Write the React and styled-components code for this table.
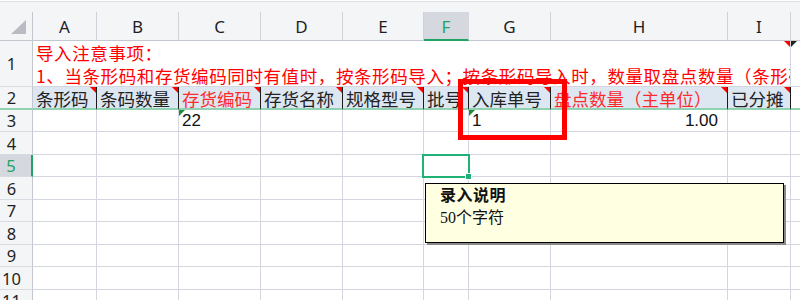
import React from 'react';
import styled, { createGlobalStyle, css } from 'styled-components';

const GlobalStyle = createGlobalStyle`
  html, body {
    margin: 0;
    padding: 0;
    background: #ffffff;
    overflow: hidden;
  }
`;

const COLS = [33, 64, 82, 82, 82, 81, 45, 82, 177, 63, 60];
const ROWS = [12, 29, 46, 23, 22, 23, 22, 23, 22, 23, 22, 23, 22];
const LETTERS = ['A', 'B', 'C', 'D', 'E', 'F', 'G', 'H', 'I', 'J'];

const GRID = '#d3d6df';
const HEAD_BG = '#f4f5f7';
const HEAD_LINE = '#c3c7cf';
const GREEN = '#21a366';
const FREEZE = '#8fd1b1';

const Frame = styled.div`
  position: relative;
  width: 800px;
  height: 300px;
  overflow: hidden;
  background: #fff;
`;

const Sheet = styled.div`
  display: grid;
  grid-template-columns: ${COLS.map(c => `${c}px`).join(' ')};
  grid-template-rows: ${ROWS.map(r => `${r}px`).join(' ')};
  width: max-content;
`;

const TopStrip = styled.div`
  grid-column: 1 / -1;
  background: ${HEAD_BG};
  border-top: 1px solid #dcdfe4;
  margin-top: 1px;
`;

const Corner = styled.div`
  position: relative;
  background: ${HEAD_BG};
  border-right: 1px solid ${HEAD_LINE};
  border-bottom: 1px solid ${HEAD_LINE};
  box-sizing: border-box;

  &::after {
    content: '';
    position: absolute;
    right: 6px;
    bottom: 6px;
    width: 0;
    height: 0;
    border-left: 15px solid transparent;
    border-bottom: 14px solid #b9bcc3;
  }
`;

const ColHead = styled.div`
  display: flex;
  align-items: center;
  justify-content: center;
  box-sizing: border-box;
  background: ${p => (p.$active ? '#d5d8de' : HEAD_BG)};
  color: ${p => (p.$active ? GREEN : '#1f1f1f')};
  border-right: 1px solid ${p => (p.$active ? '#d5d8de' : '#cfd2d9')};
  border-bottom: ${p => (p.$active ? `2px solid ${GREEN}` : `1px solid ${HEAD_LINE}`)};
  font-family: 'Noto Sans', 'Liberation Sans', sans-serif;
  font-size: 17px;
  padding-top: 1px;
`;

const RowHead = styled.div`
  display: flex;
  align-items: center;
  justify-content: center;
  padding-right: 9px;
  box-sizing: border-box;
  background: ${p => (p.$active ? '#d5d8de' : HEAD_BG)};
  color: ${p => (p.$active ? GREEN : '#1f1f1f')};
  border-right: ${p => (p.$active ? `2px solid ${GREEN}` : `1px solid ${HEAD_LINE}`)};
  border-bottom: ${p => (p.$freeze ? `2px solid ${FREEZE}` : '1px solid #d8dbe1')};
  font-family: 'Noto Sans', 'Liberation Sans', sans-serif;
  font-size: 16.5px;
`;

const Cell = styled.div`
  position: relative;
  display: flex;
  align-items: center;
  justify-content: ${p => (p.$align === 'right' ? 'flex-end' : 'flex-start')};
  box-sizing: border-box;
  padding: 0 ${p => (p.$align === 'right' ? '9px' : '3px')};
  white-space: nowrap;
  border-right: 1px solid ${GRID};
  border-bottom: 1px solid ${GRID};
  background: #fff;
  color: #111;
  font-family: 'Liberation Sans', 'Noto Sans', sans-serif;
  font-size: 17px;

  ${p =>
    p.$title &&
    css`
      overflow: hidden;
      background: #dde7f2;
      border-right-color: #1c1c1c;
      font-family: 'Noto Sans CJK SC', sans-serif;
      font-size: 17.5px;
      color: ${p.$red ? '#ff2a2a' : '#222'};
      padding-top: 1px;
    `}

  ${p =>
    p.$freeze &&
    css`
      border-bottom: 2px solid ${FREEZE};
    `}

  ${p =>
    p.$top &&
    css`
      z-index: 2;
    `}
`;

const NoteCell = styled.div`
  position: relative;
  grid-column: 2 / span 9;
  box-sizing: border-box;
  overflow: hidden;
  padding: 1px 0 0 3px;
  border-right: 1px solid ${GRID};
  border-bottom: 1px solid ${GRID};
  color: #ff0000;
  font-family: 'Noto Sans CJK SC', sans-serif;
  font-size: 17.5px;
  line-height: 22.5px;
  letter-spacing: 0.6px;
  white-space: nowrap;
`;

const CommentMark = styled.span`
  position: absolute;
  top: 0;
  width: 0;
  height: 0;
  ${p =>
    p.$left
      ? css`
          left: 0;
          border-top: 6px solid ${p.$color};
          border-right: 6px solid transparent;
        `
      : css`
          right: 0;
          border-top: 6px solid ${p.$color};
          border-left: 6px solid transparent;
        `}
`;

const Selection = styled.div`
  position: absolute;
  left: -2px;
  top: -1px;
  right: -2px;
  bottom: -2px;
  border: 2px solid #1fb176;
  pointer-events: none;

  &::after {
    content: '';
    position: absolute;
    right: -4px;
    bottom: -4px;
    width: 5px;
    height: 5px;
    background: #1fb176;
    border: 1px solid #fff;
  }
`;

const Tooltip = styled.div`
  position: absolute;
  left: 1px;
  top: 28px;
  width: 359px;
  height: 60px;
  box-sizing: border-box;
  padding: 1px 0 0 14px;
  background: #ffffe1;
  border: 1px solid #000;
  box-shadow: 2px 2px 0 #8a8a8a;
  font-family: 'Liberation Serif', 'Noto Sans CJK SC', serif;
  font-size: 16px;
  line-height: 22px;
  color: #111;
  white-space: nowrap;
  z-index: 4;
`;

const TipTitle = styled.div`
  font-weight: 700;
  letter-spacing: 0.5px;
`;

const Highlight = styled.div`
  position: absolute;
  left: 458px;
  top: 79px;
  width: 109px;
  height: 61px;
  box-sizing: border-box;
  border: 5px solid #ff0000;
  pointer-events: none;
  z-index: 5;
`;

const headers = [
  { text: '条形码' },
  { text: '条码数量' },
  { text: '存货编码', red: true },
  { text: '存货名称' },
  { text: '规格型号' },
  { text: '批号' },
  { text: '入库单号' },
  { text: '盘点数量（主单位）', red: true },
  { text: '已分摊' },
];

const row3 = {
  2: { text: '22', mark: true },
  6: { text: '1', mark: true },
  7: { text: '1.00', align: 'right' },
};

export default function App() {
  const dataRows = [3, 4, 5, 6, 7, 8, 9, 10, 11];

  return (
    <Frame>
      <GlobalStyle />
      <Sheet>
        <TopStrip />
        <Corner />
        {LETTERS.map(l => (
          <ColHead key={l} $active={l === 'F'}>
            {l}
          </ColHead>
        ))}

        <RowHead>1</RowHead>
        <NoteCell>
          <div>导入注意事项：</div>
          <div>1、当条形码和存货编码同时有值时，按条形码导入；按条形码导入时，数量取盘点数量（条形码数量）</div>
          <CommentMark $color="#ff0000" />
        </NoteCell>
        <Cell>
          <CommentMark $left $color="#222" />
        </Cell>

        <RowHead $freeze>2</RowHead>
        {headers.map(h => (
          <Cell key={h.text} $title $freeze $red={h.red}>
            {h.text}
            <CommentMark $color="#ff0000" />
          </Cell>
        ))}
        <Cell $freeze />

        {dataRows.map(r => (
          <React.Fragment key={r}>
            <RowHead $active={r === 5}>{r}</RowHead>
            {LETTERS.map((l, i) => {
              const data = r === 3 ? row3[i] : null;
              const selected = r === 5 && l === 'F';
              return (
                <Cell key={l} $align={data?.align} $top={selected}>
                  {data?.text}
                  {data?.mark && <CommentMark $left $color="#1e8c3a" />}
                  {selected && (
                    <>
                      <Selection />
                      <Tooltip>
                        <TipTitle>录入说明</TipTitle>
                        <div>50个字符</div>
                      </Tooltip>
                    </>
                  )}
                </Cell>
              );
            })}
          </React.Fragment>
        ))}
      </Sheet>
      <Highlight />
    </Frame>
  );
}
